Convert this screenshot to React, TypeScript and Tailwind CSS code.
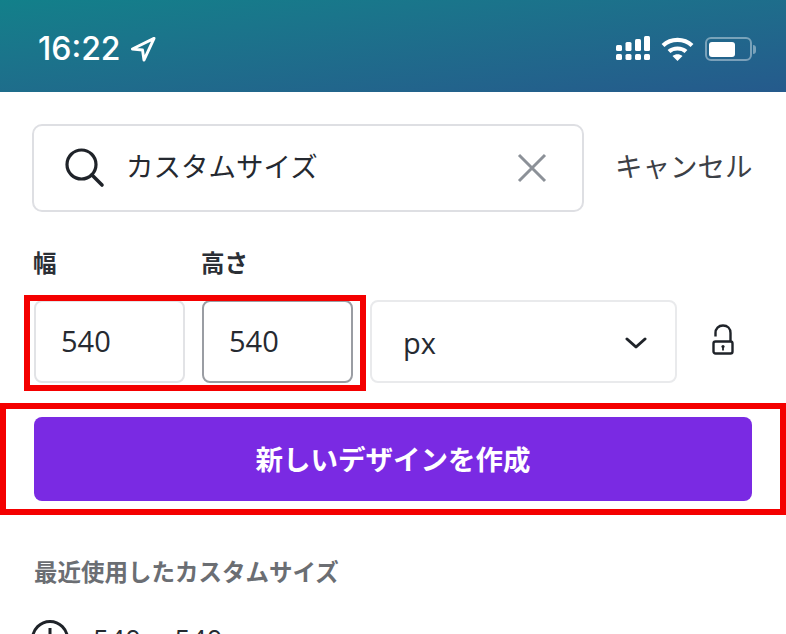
import React from 'react';

const jp = { fontFamily: '"Noto Sans CJK JP", "Noto Sans", sans-serif' };

const StatusBar = () => (
  <div className="flex h-[92px] items-center justify-between bg-gradient-to-br from-[#12808a] to-[#255a8c] pl-[38px] pr-[30px] pt-[6px] text-white">
    <div className="flex items-center gap-[9px]">
      <span className="font-['Inter'] text-[32px] leading-none font-medium tracking-[0px]">16:22</span>
      <svg width="26" height="26" viewBox="0 0 27 27" fill="none">
        <path d="M25 2.5 2.5 13.5 13 14.5 14.5 25Z" stroke="#fff" strokeWidth="3" strokeLinejoin="round" />
      </svg>
    </div>
    <div className="flex items-center gap-[11px]">
      <svg width="34" height="26" viewBox="0 0 34 26" fill="#fff">
        <rect x="0" y="18" width="6" height="6" rx="1.5" />
        <rect x="9.5" y="18" width="6" height="6" rx="1.5" />
        <rect x="19" y="18" width="6" height="6" rx="1.5" />
        <rect x="28" y="18" width="6" height="6" rx="1.5" />
        <rect x="0" y="9" width="6" height="6" rx="1.5" />
        <rect x="9.5" y="6" width="6" height="9" rx="1.5" />
        <rect x="19" y="3" width="6" height="12" rx="1.5" />
        <rect x="28" y="0" width="6" height="15" rx="1.5" />
      </svg>
      <svg width="33" height="26" viewBox="0 0 33 26" fill="none" stroke="#fff" strokeWidth="4.2">
        <path d="M2 9.5C10 2 23 2 31 9.5" />
        <path d="M8 15.5C12.5 11.5 20.5 11.5 25 15.5" />
        <path d="M16.5 25 11.5 20C14.5 17.5 18.5 17.5 21.5 20Z" fill="#fff" stroke="none" />
      </svg>
      <div className="flex items-center gap-[1px]">
        <div className="flex h-[24px] w-[47px] items-center rounded-[6px] border-2 border-white/40 p-[2px]">
          <div className="h-[15px] w-[26px] rounded-[3px] bg-white" />
        </div>
        <div className="h-[9px] w-[3px] rounded-r-full bg-white/40" />
      </div>
    </div>
  </div>
);

const SearchRow = () => (
  <div className="flex items-center pl-[32px]">
    <div className="flex h-[88px] w-[552px] items-center rounded-[10px] border-2 border-[#dedfe3] pl-[30px] pr-[35px]">
      <svg width="42" height="42" viewBox="0 0 42 42" fill="none" stroke="#1f2329" strokeWidth="3.2" strokeLinecap="round">
        <circle cx="17.5" cy="17.5" r="14.5" />
        <path d="M28 28 38 38" strokeWidth="3.6" />
      </svg>
      <span className="ml-[20px] flex-1 pb-[5px] text-[27.5px] leading-none text-[#252930]" style={jp}>カスタムサイズ</span>
      <svg width="30" height="30" viewBox="0 0 30 30" fill="none" stroke="#8c9198" strokeWidth="3">
        <path d="M2 2 28 28M28 2 2 28" />
      </svg>
    </div>
    <span className="ml-[31px] pb-[5px] text-[27.5px] leading-none whitespace-nowrap text-[#3c4046]" style={jp}>キャンセル</span>
  </div>
);

const SizeField = ({ value, active }: { value: string; active?: boolean }) => (
  <div className={`flex h-[83px] w-[151px] items-center rounded-[8px] border-2 pb-[2px] pl-[25px] font-['Open_Sans'] text-[29px] text-[#262a31] ${active ? 'border-[#9a9da3]' : 'border-[#e2e3e6]'}`}>
    {value}
  </div>
);

const App = () => (
  <div className="relative h-[634px] w-[786px] overflow-hidden bg-white">
    <StatusBar />
    <div className="pt-[32px]">
      <SearchRow />

      <div className="mt-[35px] flex pl-[33px] text-[23.5px] leading-[30px] font-bold text-[#2b2f36]" style={jp}>
        <span className="w-[168px]">幅</span>
        <span>高さ</span>
      </div>

      <div className="mt-[23px] flex items-center pl-[34px]">
        <SizeField value="540" />
        <div className="ml-[17px]">
          <SizeField value="540" active />
        </div>
        <div className="ml-[17px] flex h-[83px] w-[307px] items-center justify-between rounded-[8px] border-2 border-[#e9eaec] pl-[31px] pr-[28px]">
          <span className="pt-[2px] font-['Open_Sans'] text-[29px] text-[#262a31]">px</span>
          <svg className="mt-[3px]" width="22" height="12" viewBox="0 0 22 12" fill="none" stroke="#1f2329" strokeWidth="3" strokeLinecap="round" strokeLinejoin="round">
            <path d="M2 2 11 10 20 2" />
          </svg>
        </div>
        <svg className="mb-[4px] ml-[35px]" width="22" height="31" viewBox="0 0 22 31" fill="none" stroke="#1f2329" strokeWidth="2.4">
          <path d="M3.5 12.5V9C3.5 4.5 6.5 1.5 11 1.5s7.5 3 7.5 7.5V18" />
          <rect x="1.5" y="17.5" width="19" height="12" rx="2" />
          <circle cx="11" cy="22.5" r="1.6" fill="#1f2329" stroke="none" />
          <path d="M11 22.5v4" strokeWidth="1.8" />
        </svg>
      </div>

      <div className="mt-[34px] px-[34px]">
        <div className="flex h-[84px] items-center justify-center rounded-[8px] bg-[#7a2ae3] text-[27.5px] font-bold text-white" style={jp}>
          新しいデザインを作成
        </div>
      </div>

      <div className="mt-[53px] pl-[34px] text-[23.5px] leading-[34px] font-bold text-[#6b6e73]" style={jp}>
        最近使用したカスタムサイズ
      </div>

      <div className="mt-[32px] flex items-start pl-[31px]">
        <svg width="38" height="38" viewBox="0 0 38 38" fill="none" stroke="#1f2329" strokeWidth="3">
          <circle cx="19" cy="19" r="17.5" />
          <path d="M19 8v12l7 5" />
        </svg>
        <span className="ml-[24px] font-['Open_Sans'] text-[28px] leading-[38px] [word-spacing:1.5px] text-[#262a31]">540 × 540</span>
      </div>
    </div>

    {/* red annotation boxes drawn on top of the screenshot */}
    <div className="absolute top-[295px] left-[24px] h-[96px] w-[342px] border-[6px] border-[#f40000]" />
    <div className="absolute top-[403px] left-0 h-[112px] w-[786px] border-[6px] border-[#f40000]" />
  </div>
);

export default App;
